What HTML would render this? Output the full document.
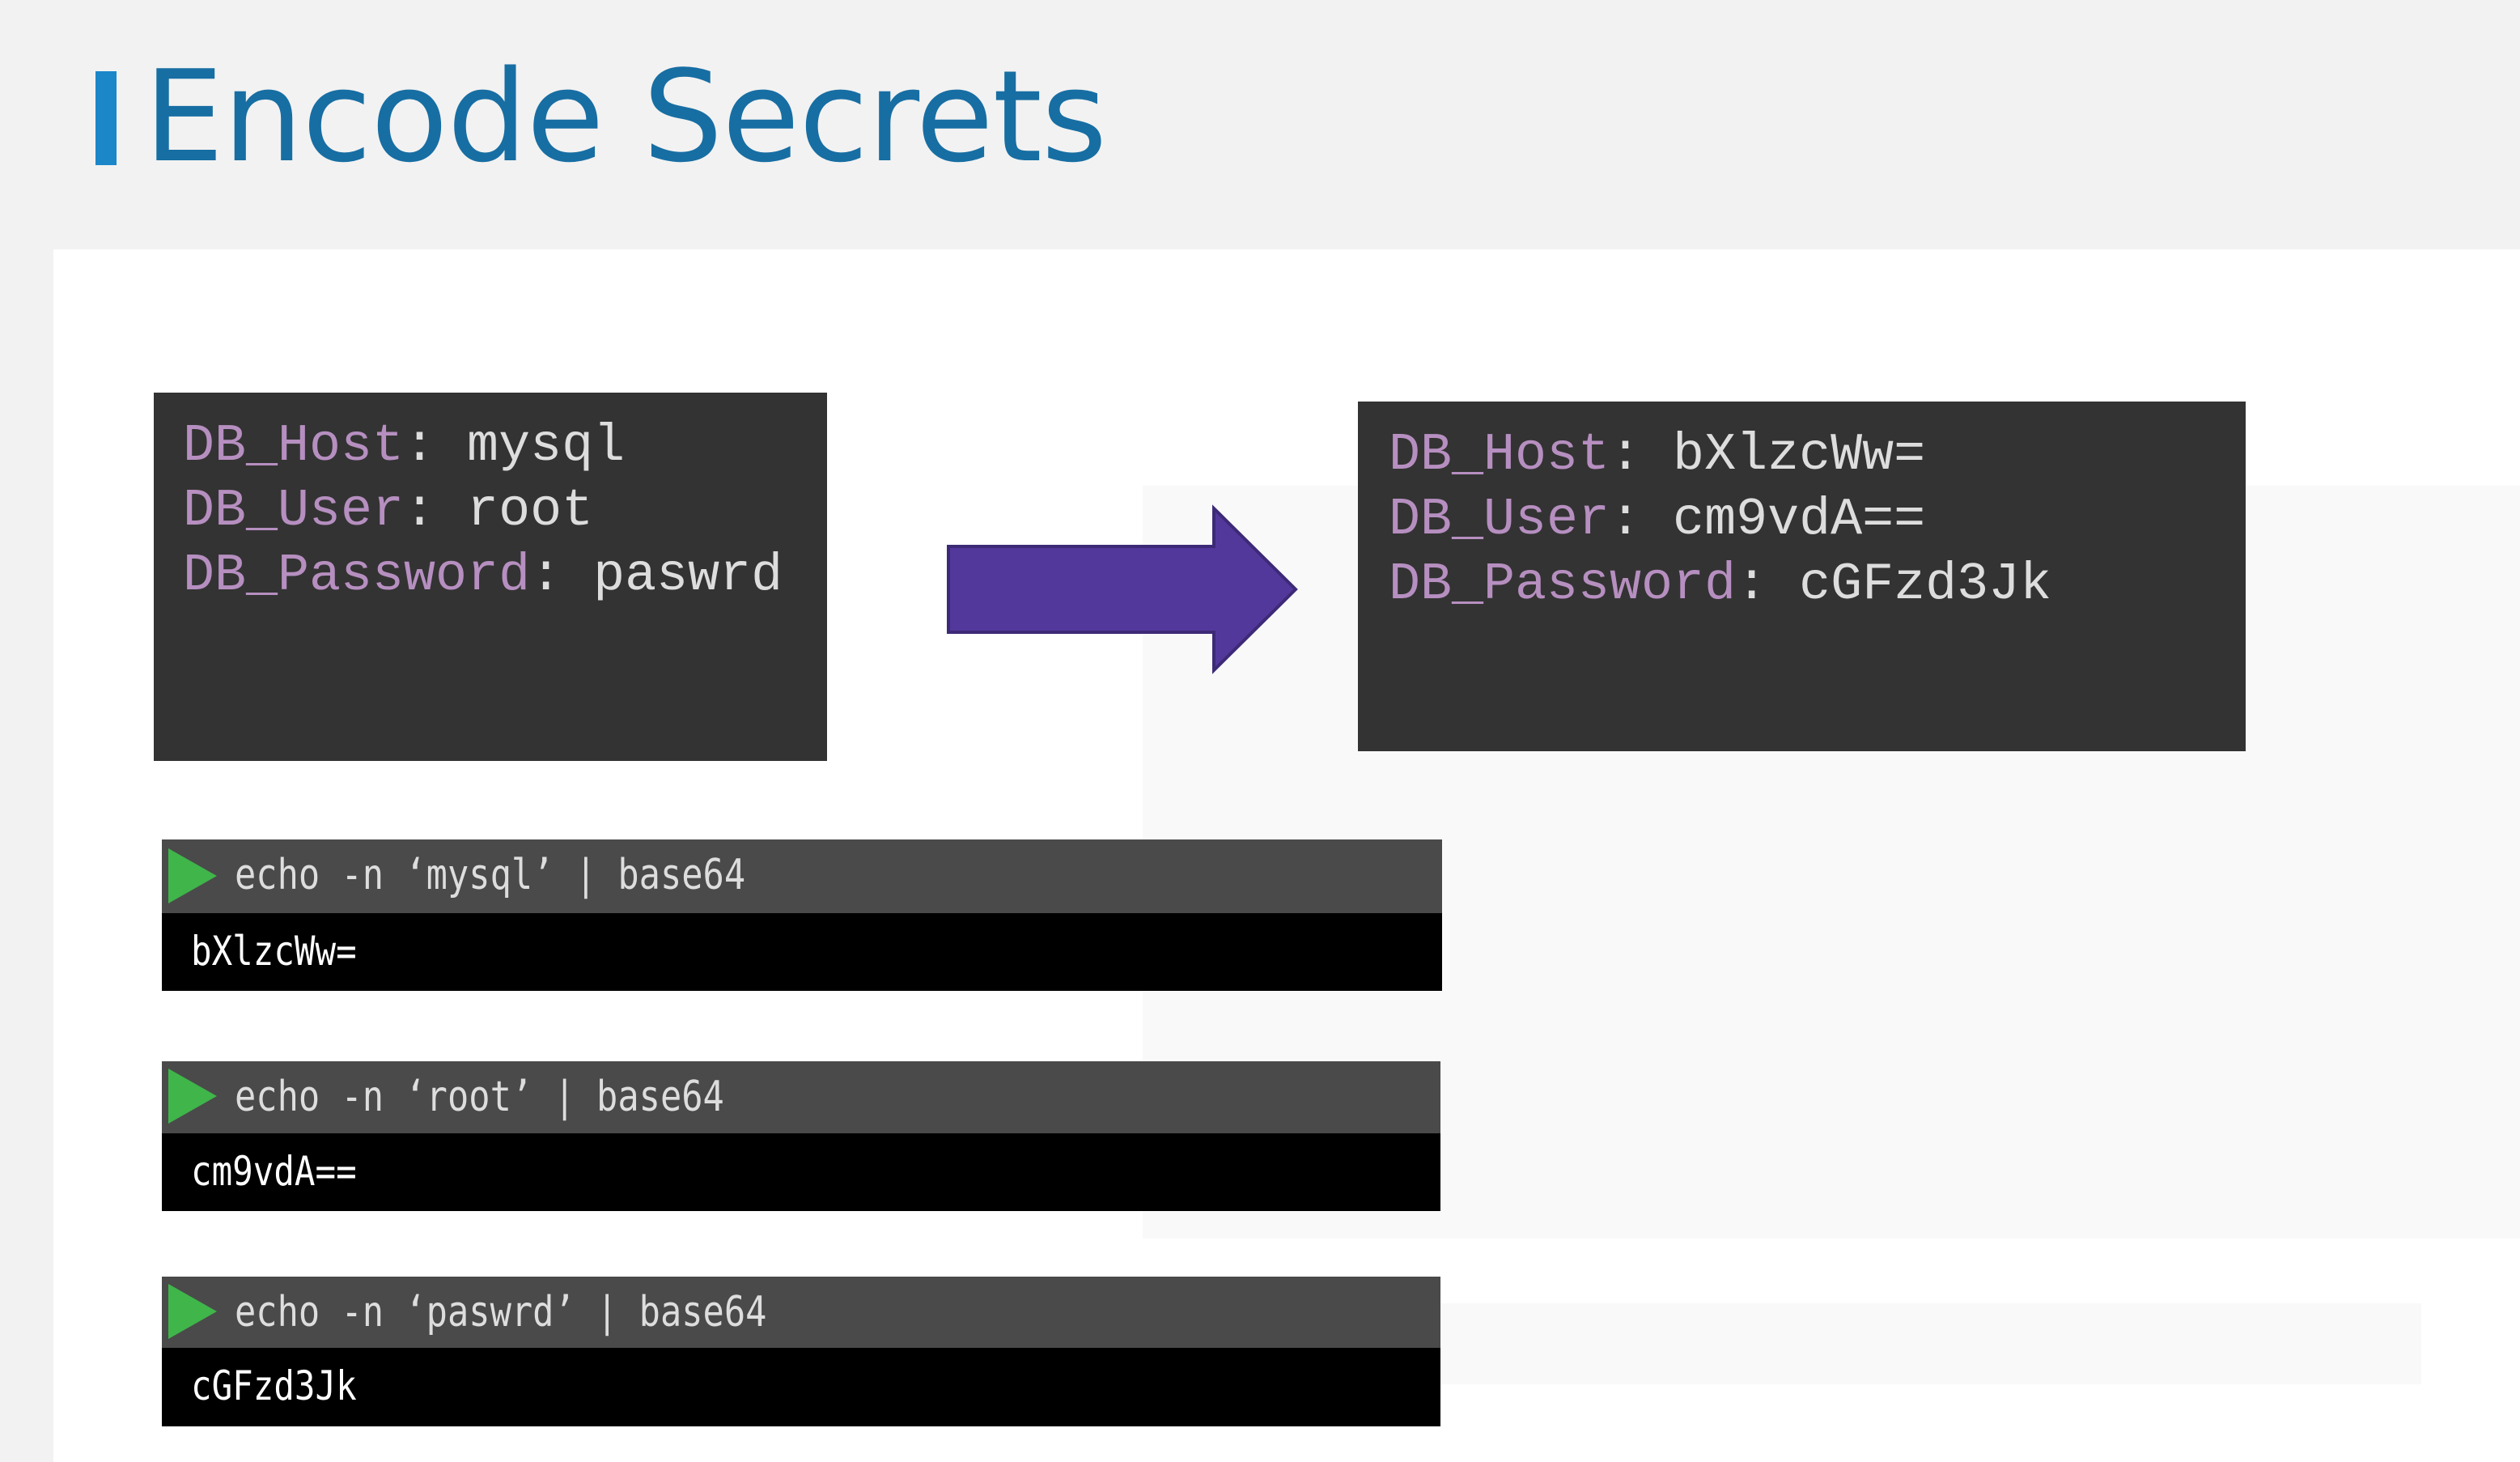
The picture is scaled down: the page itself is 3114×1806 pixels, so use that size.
<!DOCTYPE html>
<html><head><meta charset="utf-8"><style>
*{margin:0;padding:0;box-sizing:border-box}
body{width:3114px;height:1806px;background:#f2f2f2;position:relative;overflow:hidden;font-family:"Liberation Sans",sans-serif}
.abs{position:absolute}
.panel{left:66px;top:308px;width:3048px;height:1498px;background:#fff}
.ghost{background:#f9f9f9}
.title{left:178px;top:44px;font-size:156px;color:#176ea3;letter-spacing:-1px;line-height:200px;font-family:"DejaVu Sans","Liberation Sans",sans-serif}
.bar{left:118px;top:88px;width:26px;height:116px;background:#1b87c9}
.box{background:#333;font-family:"Liberation Mono",monospace;font-size:65px;line-height:80px;color:#ddd;white-space:pre}
.k{color:#b68fc0}
.hd{background:#4a4a4a;color:#ddd;white-space:pre}
.out{background:#000;color:#fff;white-space:pre}
.t{display:inline-block;font-family:"DejaVu Sans Mono",monospace;transform-origin:left center}
.hd .t{font-size:52px;transform:scaleX(0.84)}
.out .t{font-size:50px;transform:scaleX(0.85)}
.tri{width:0;height:0;border-top:34px solid transparent;border-bottom:34px solid transparent;border-left:60px solid #3fb54a}
</style></head><body>
<div class="abs panel"></div>
<div class="abs ghost" style="left:1412px;top:600px;width:1702px;height:930px"></div>
<div class="abs ghost" style="left:1412px;top:1610px;width:1580px;height:100px"></div>
<div class="abs bar"></div>
<div class="abs title">Encode Secrets</div>

<div class="abs box" style="left:190px;top:485px;width:832px;height:455px;padding:26px 0 0 36px"><span class="k">DB_Host</span>: mysql
<span class="k">DB_User</span>: root
<span class="k">DB_Password</span>: paswrd</div>

<svg class="abs" style="left:1160px;top:615px" width="460" height="230">
<polygon points="12,60 340,60 340,13 441,113 340,213 340,166 12,166" fill="#53389c" stroke="#3d2a77" stroke-width="4"/>
</svg>

<div class="abs box" style="left:1678px;top:496px;width:1097px;height:432px;padding:26px 0 0 38px"><span class="k">DB_Host</span>: bXlzcWw=
<span class="k">DB_User</span>: cm9vdA==
<span class="k">DB_Password</span>: cGFzd3Jk</div>

<div class="abs hd" style="left:200px;top:1037px;width:1582px;height:91px;padding:14px 0 0 90px"><span class="t">echo -n ‘mysql’ | base64</span></div>
<div class="abs tri" style="left:208px;top:1048px"></div>
<div class="abs out" style="left:200px;top:1128px;width:1582px;height:96px;padding:18px 0 0 36px"><span class="t">bXlzcWw=</span></div>

<div class="abs hd" style="left:200px;top:1311px;width:1580px;height:89px;padding:14px 0 0 90px"><span class="t">echo -n ‘root’ | base64</span></div>
<div class="abs tri" style="left:208px;top:1320px"></div>
<div class="abs out" style="left:200px;top:1400px;width:1580px;height:96px;padding:18px 0 0 36px"><span class="t">cm9vdA==</span></div>

<div class="abs hd" style="left:200px;top:1577px;width:1580px;height:88px;padding:14px 0 0 90px"><span class="t">echo -n ‘paswrd’ | base64</span></div>
<div class="abs tri" style="left:208px;top:1586px"></div>
<div class="abs out" style="left:200px;top:1665px;width:1580px;height:97px;padding:18px 0 0 36px"><span class="t">cGFzd3Jk</span></div>
</body></html>
